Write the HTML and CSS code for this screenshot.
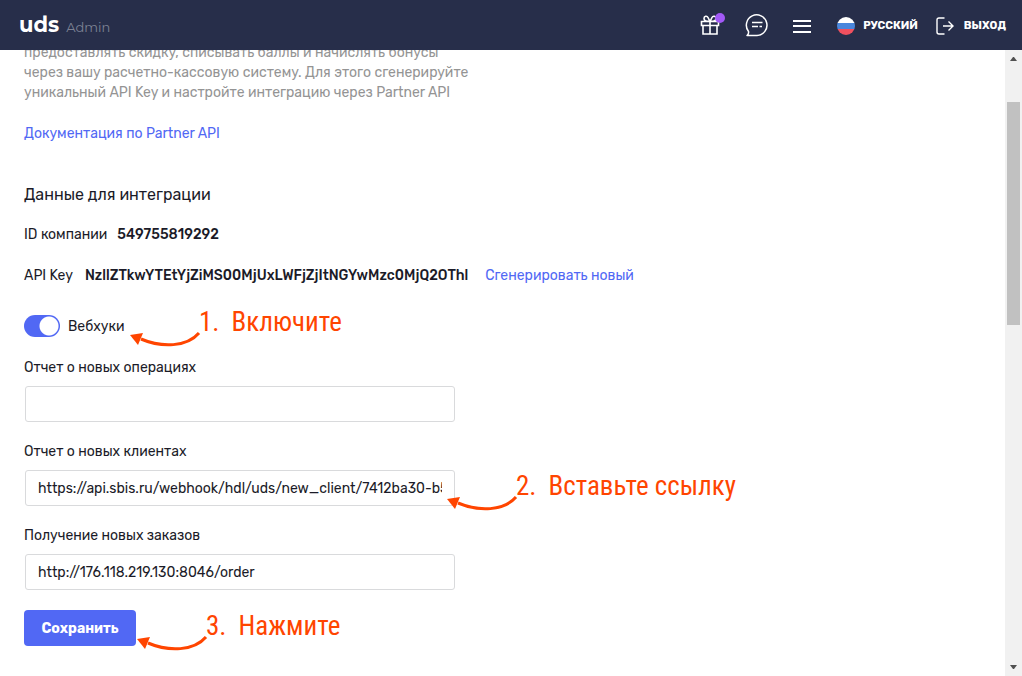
FILE: index.html
```html
<!DOCTYPE html>
<html lang="ru">
<head>
<meta charset="utf-8">
<meta name="viewport" content="width=device-width, initial-scale=1">
<title>UDS Admin</title>
<link rel="stylesheet" href="styles.css">
</head>
<body>
<header class="topbar">
  <a class="brand" href="#"><span class="brand-name">uds</span><span class="brand-sub">Admin</span></a>
  <nav class="tools">
    <button class="tool" type="button" aria-label="Подарки">
      <svg width="20" height="22" viewBox="0 0 20 22" fill="none" stroke="#fff" stroke-width="1.6"><path d="M1.500 7.500h17v4h-17zM3 11.500v8.500h14v-8.500M10 7.500v12.500M10 7.500C7 7.500 4 7 4 4.500s3-3 4-1l2 4 2-4c1-2 4-1.500 4 1s-3 3-6 3"/></svg>
      <span class="dot"></span>
    </button>
    <button class="tool tool-chat" type="button" aria-label="Сообщения">
      <svg width="24" height="24" viewBox="0 0 24 24" fill="none" stroke="#fff" stroke-width="1.5"><path d="M2 22.500q2-1.500 1.500-4A10.300 10.300 0 1 1 12 22.500z" stroke-linejoin="round"/><path d="M7 9.500h10.500M7 13.500h6M14.500 13.500h2.500"/></svg>
    </button>
    <button class="tool tool-menu" type="button" aria-label="Меню">
      <svg width="18" height="15" viewBox="0 0 18 15" fill="#fff"><path d="M0 1h18v2H0zM0 6h18v2H0zM0 12h18v2H0z"/></svg>
    </button>
    <button class="tool tool-lang" type="button">
      <svg width="18" height="18" viewBox="0 0 18 18"><clipPath id="flag"><circle cx="9" cy="9" r="9"/></clipPath><g clip-path="url(#flag)"><path fill="#fff" d="M0 0h18v6H0z"/><path fill="#4a86dc" d="M0 6h18v6H0z"/><path fill="#f0505f" d="M0 12h18v6H0z"/></g></svg>
      <span>РУССКИЙ</span>
    </button>
    <a class="tool tool-exit" href="#">
      <svg width="18" height="18" viewBox="0 0 18 18" fill="none" stroke="#fff" stroke-width="1.4"><path d="M8.500 1H3q-2 0-2 2v12q0 2 2 2h5.500M7 9h9.500M12.500 4.500L17 9l-4.500 4.500"/></svg>
      <span>ВЫХОД</span>
    </a>
  </nav>
</header>
<div class="page">
  <main class="content">
    <p class="intro">предоставлять скидку, списывать баллы и начислять бонусы<br>через вашу расчетно-кассовую систему. Для этого сгенерируйте<br>уникальный API Key и настройте интеграцию через Partner API</p>
    <a class="link docs" href="#">Документация по Partner API</a>
    <h1 class="title">Данные для интеграции</h1>
    <div class="row company"><span>ID компании</span><strong>549755819292</strong></div>
    <div class="row key"><span>API Key</span><strong>NzllZTkwYTEtYjZiMS00MjUxLWFjZjItNGYwMzc0MjQ2OThl</strong><a class="link" href="#">Сгенерировать новый</a></div>
    <form class="form">
      <div class="anchor switch-row">
        <input class="switch" type="checkbox" role="switch" id="hooks" checked>
        <label for="hooks">Вебхуки</label>
        <div class="note note-enable">
          <svg class="arrow" width="72" height="24" viewBox="0 0 72 24"><path d="M69 3C57 17 32 18 11 9" fill="none" stroke="#ff4500" stroke-width="3"/><path fill="#ff4500" d="M0 5l13-2-5 12z"/></svg>
          <span class="step">1.</span><span>Включите</span>
        </div>
      </div>
      <div class="field">
        <label for="operations">Отчет о новых операциях</label>
        <input class="text" id="operations" type="text">
      </div>
      <div class="field anchor">
        <label for="clients">Отчет о новых клиентах</label>
        <input class="text" id="clients" type="text" value="https://api.sbis.ru/webhook/hdl/uds/new_client/7412ba30-b5">
        <div class="note note-paste">
          <svg class="arrow" width="72" height="24" viewBox="0 0 72 24"><path d="M69 3C57 17 32 18 11 9" fill="none" stroke="#ff4500" stroke-width="3"/><path fill="#ff4500" d="M0 5l13-2-5 12z"/></svg>
          <span class="step">2.</span><span>Вставьте ссылку</span>
        </div>
      </div>
      <div class="field">
        <label for="orders">Получение новых заказов</label>
        <input class="text" id="orders" type="text" value="http://176.118.219.130:8046/order">
      </div>
      <div class="anchor actions">
        <button class="save" type="submit">Сохранить</button>
        <div class="note note-save">
          <svg class="arrow" width="72" height="24" viewBox="0 0 72 24"><path d="M69 3C57 17 32 18 11 9" fill="none" stroke="#ff4500" stroke-width="3"/><path fill="#ff4500" d="M0 5l13-2-5 12z"/></svg>
          <span class="step">3.</span><span>Нажмите</span>
        </div>
      </div>
    </form>
  </main>
  <div class="scrollbar" aria-hidden="true">
    <svg width="7" height="4" viewBox="0 0 7 4" fill="#505050"><path d="M0 4l3-4h1l3 4z"/></svg>
    <div class="thumb"></div>
    <svg class="down" width="7" height="4" viewBox="0 0 7 4" fill="#505050"><path d="M0 0l3 4h1l3-4z"/></svg>
  </div>
</div>
</body>
</html>
```
FILE: styles.css
```css
* { box-sizing: border-box; }
body {
  margin: 0;
  height: 100vh;
  display: flex;
  flex-direction: column;
  overflow: hidden;
  background: #fff;
  color: #1b1b28;
  font: 14px/20px Rubik, Roboto, "Liberation Sans", sans-serif;
}
button, input { font: inherit; color: inherit; }
h1, p { margin: 0; }

.topbar {
  flex: none;
  height: 50px;
  padding: 0 16px 0 19px;
  display: flex;
  align-items: center;
  justify-content: space-between;
  background: #272e4a;
  color: #fff;
}
.brand { display: flex; align-items: baseline; gap: 7px; padding-top: 2px; color: #fff; text-decoration: none; }
.brand-name { font: 700 21px/28px Montserrat, Inter, sans-serif; }
.brand-sub { font: 13px/28px Montserrat, Inter, sans-serif; color: #7d8294; }
.tools { display: flex; align-items: center; }
.tool {
  position: relative;
  display: flex;
  align-items: center;
  padding: 0;
  border: 0;
  background: none;
  color: #fff;
  font-size: 11px;
  font-weight: 700;
  text-decoration: none;
}
.tool svg { display: block; }
.dot { position: absolute; top: -1px; right: -5px; width: 10px; height: 10px; border-radius: 50%; background: #a259f7; }
.tool-chat { margin-left: 25px; }
.tool-menu { margin-left: 24px; padding-top: 3px; }
.tool-lang { margin-left: 26px; padding-top: 2px; gap: 8px; }
.tool-exit { margin-left: 18px; padding-top: 2px; gap: 10px; }

.page { flex: 1; min-height: 0; display: flex; overflow: hidden; }
.content { flex: 1; min-width: 0; padding: 0 24px; overflow: hidden; }
.intro { margin-top: -7px; color: #949494; }
.link { color: #5168f4; text-decoration: none; }
.docs { display: block; width: fit-content; margin-top: 21px; }
.title { margin-top: 39px; font-size: 16px; line-height: 24px; font-weight: 400; }
.row { display: flex; }
.row strong { font-weight: 500; }
.company { margin-top: 18px; gap: 10px; }
.key { margin-top: 21px; gap: 12px; }
.key .link { margin-left: 5px; }

.anchor { position: relative; }
.switch-row { margin: 29px 0 21px; display: flex; align-items: center; gap: 8px; width: fit-content; }
.switch-row label { padding-top: 2px; }
.switch {
  appearance: none;
  width: 36px;
  height: 22px;
  margin: 0;
  border-radius: 11px;
  background: radial-gradient(circle at 25px 11px, #fff 9px, #5168f4 10px);
}
.field { width: 431px; max-width: 100%; margin-top: 20px; }
.field label { display: block; }
.text {
  display: block;
  width: 430px;
  max-width: 100%;
  height: 36px;
  margin: 8px 0 0 1px;
  padding: 0 12px;
  border: 1px solid #d9dadc;
  border-radius: 3px;
  background: #fff;
}
.actions { margin-top: 20px; width: fit-content; }
.save {
  display: block;
  height: 36px;
  width: 112px;
  padding: 2px 0 0;
  border: 0;
  border-radius: 4px;
  background: #5168f4;
  color: #fff;
  font-weight: 700;
}

.note {
  position: absolute;
  display: flex;
  gap: 12px;
  padding-left: 69px;
  color: #ff4500;
  font: 27px/32px "Liberation Sans Narrow", "Roboto Condensed", Roboto, sans-serif;
  white-space: nowrap;
}
.arrow { position: absolute; left: 0; top: 24px; }
.note-enable { left: 106px; top: -9px; }
.note-paste { left: 423px; top: 28px; }
.note-save { left: 113px; top: 0; }

.scrollbar {
  flex: none;
  width: 17px;
  padding: 7px 2px 7px;
  display: flex;
  flex-direction: column;
  align-items: center;
  background: #f1f1f1;
}
.thumb { width: 13px; height: 223px; margin-top: 41px; background: #c1c1c1; }
.down { margin-top: auto; }
```
